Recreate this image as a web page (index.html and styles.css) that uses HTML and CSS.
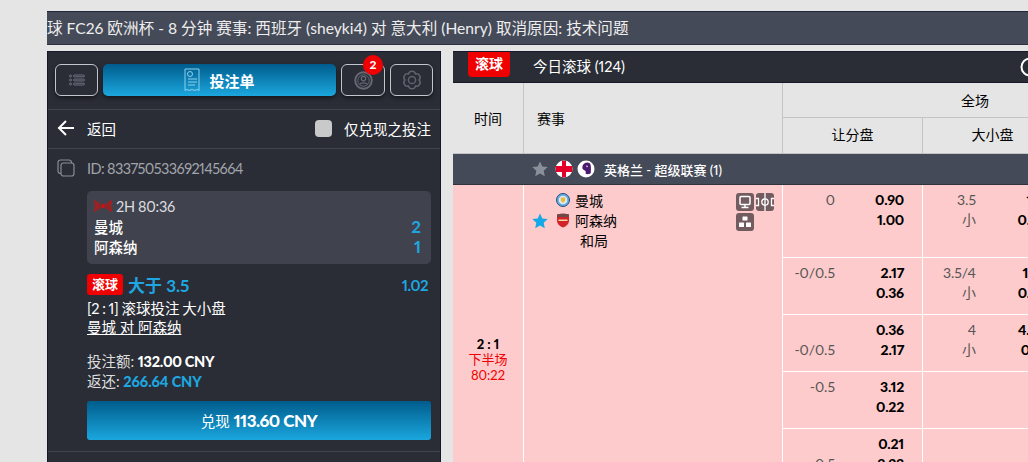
FILE: index.html
```html
<!DOCTYPE html>
<html lang="zh">
<head>
<meta charset="utf-8">
<title>投注单</title>
<link rel="stylesheet" href="styles.css">
</head>
<body>
<div class="marquee">球 FC26 欧洲杯 - 8 分钟 赛事: 西班牙 (sheyki4) 对 意大利 (Henry) 取消原因: 技术问题</div>
<div class="main">
  <aside class="side">
    <div class="toolbar">
      <button class="tool">
        <svg class="tool-ico" viewBox="0 0 16 12" width="16" height="12"><g fill="none" stroke="#6f7380" stroke-width="1"><circle cx="1.500" cy="2" r="1"/><circle cx="1.500" cy="6" r="1"/><circle cx="1.500" cy="10" r="1"/><rect x="4.500" y="1" width="11" height="1.800" rx=".7"/><rect x="4.500" y="5.100" width="11" height="1.800" rx=".7"/><rect x="4.500" y="9.200" width="11" height="1.800" rx=".7"/></g></svg>
      </button>
      <button class="slip-btn">
        <svg viewBox="0 0 16 24" width="16" height="24"><g fill="none" stroke="#8fd0ee" stroke-width="1"><path d="M1 1h14v21.500l-2-1-2 1-3-1-3 1-2-1-2 1z"/><circle cx="6" cy="6" r="2.500"/><path d="M4 11h9M4 14h9M4 17h7"/></g></svg>
        <span>投注单</span>
      </button>
      <button class="tool tool-wide">
        <svg viewBox="0 0 20 20" width="19" height="19"><g fill="none" stroke="#666a76"><circle cx="10" cy="10" r="8.700" stroke-width="2"/><circle cx="10" cy="10" r="6" stroke-width="1"/><circle cx="10" cy="8" r="2.300" stroke-width="1.300"/><path d="M5.800 14.200c1.400-2.400 7-2.400 8.400 0" stroke-width="1.300"/></g></svg>
        <span class="count">2</span>
      </button>
      <button class="tool">
        <svg viewBox="0 0 20 20" width="20" height="20"><g fill="none" stroke="#5f636f" stroke-width="1.500"><path d="M17 10A3.600 3.600 0 0 1 13.500 16.060 3.600 3.600 0 0 1 6.500 16.060 3.600 3.600 0 0 1 3 10 3.600 3.600 0 0 1 6.500 3.940 3.600 3.600 0 0 1 13.500 3.940 3.600 3.600 0 0 1 17 10z"/><circle cx="10" cy="10" r="3.600"/></g></svg>
      </button>
    </div>
    <div class="back-row">
      <svg class="arrow" viewBox="0 0 18 18" width="18" height="18"><path d="M9 2L2 9l7 7M2 9h15" fill="none" stroke="#fff" stroke-width="2"/></svg>
      <span class="back-label">返回</span>
      <span class="check"></span>
      <span class="check-label">仅兑现之投注</span>
    </div>
    <section class="bet">
      <div class="bet-id">
        <svg viewBox="0 0 18 18" width="18" height="18"><g fill="none" stroke="#8a8d96" stroke-width="1.200"><path d="M4 14.500H3.500A2.500 2.500 0 0 1 1 12V3.500A2.500 2.500 0 0 1 3.500 1H12a2.500 2.500 0 0 1 2.500 2.500V4"/><rect x="4" y="4" width="13" height="13" rx="2.500"/></g></svg>
        <span class="bet-id-text">ID: 833750533692145664</span>
      </div>
      <div class="bet-body">
        <div class="score-box">
          <div class="clock">
            <svg viewBox="0 0 18 12" width="18" height="12"><g fill="none" stroke="#c81212" stroke-width="1.400"><circle cx="9" cy="6" r="1.500" fill="#e01010"/><path d="M6 3q-1.500 3 0 6M12 3q1.500 3 0 6M3.800 1.500q-2.400 4.500 0 9M14.200 1.500q2.400 4.500 0 9M1.500.5q-3 5.500 0 11M16.500.5q3 5.500 0 11"/></g></svg>
            <span class="clock-text">2H 80:36</span>
          </div>
          <div class="team-score"><span>曼城</span><b>2</b></div>
          <div class="team-score"><span>阿森纳</span><b>1</b></div>
        </div>
        <div class="pick">
          <span class="live-tag">滚球</span>
          <span class="pick-name">大于 3.5</span>
          <span class="pick-odds">1.02</span>
        </div>
        <div class="bet-line bet-desc">[2 : 1] 滚球投注 大小盘</div>
        <div class="bet-line bet-match">曼城 对 阿森纳</div>
        <div class="stake">投注额: <b>132.00 CNY</b></div>
        <div class="stake">返还: <b class="blue">266.64 CNY</b></div>
        <button class="cashout">兑现 <b>113.60 CNY</b></button>
      </div>
    </section>
  </aside>

  <main class="board">
    <header class="board-head">
      <span class="board-tag">滚球</span>
      <span class="board-title">今日滚球 (124)</span>
      <svg class="board-ring" viewBox="0 0 20 20" width="20" height="20"><circle cx="10" cy="10" r="8.500" fill="none" stroke="#fff" stroke-width="2"/></svg>
    </header>
    <table class="odds">
      <colgroup><col class="c-time"><col class="c-event"><col class="c-mk"><col class="c-mk"><col class="c-x"></colgroup>
      <thead>
        <tr class="h1"><th rowspan="2" class="th-time">时间</th><th rowspan="2" class="th-event">赛事</th><th colspan="3" class="th-full">全场</th></tr>
        <tr class="h2"><th>让分盘</th><th>大小盘</th><th>独赢盘</th></tr>
      </thead>
      <tbody>
        <tr class="league"><td colspan="5">
          <div class="league-in">
            <svg viewBox="0 0 16 16" width="16" height="16"><path d="M8 .5l2.300 5 5.400.6-4 3.700 1.100 5.400L8 12.500l-4.800 2.700 1.100-5.400-4-3.700 5.400-.6z" fill="#8b8f9a"/></svg>
            <svg class="l-flag" viewBox="0 0 18 18" width="18" height="18"><circle cx="9" cy="9" r="8.500" fill="#fff"/><path d="M7 .7h4v5.300h6.300v6H11v5.300H7V12H.7V6H7z" fill="#e4002b"/></svg>
            <svg class="l-pl" viewBox="0 0 18 18" width="18" height="18"><circle cx="9" cy="9" r="8.500" fill="#fff"/><path d="M6 5c1-2.500 5-3.500 7-1.500 1.200 1.500 1 6 .8 9.500-1.500 1.500-4 1.500-5.300.5.700-1.500.2-3-1.200-3.300C5 9.500 5 7 6 5z" fill="#4b1a6e"/><path d="M9 5.500l2 .5-1 1.500z" fill="#fff"/></svg>
            <span>英格兰 - 超级联赛 (1)</span>
          </div>
        </td></tr>
        <tr class="r-first">
          <td rowspan="6" class="td-time"><b>2 : 1</b><span>下半场</span><span>80:22</span></td>
          <td rowspan="6" class="td-event">
            <div class="event-in">
              <div class="teams">
                <div class="team">
                  <svg viewBox="0 0 14 14" width="14" height="14"><circle cx="7" cy="7" r="6.500" fill="#6cabdd" stroke="#1c4f86"/><circle cx="7" cy="7" r="4.300" fill="#dcecf6"/><path d="M4.800 4.500h4.400v3.300L7 10 4.800 7.800z" fill="#e8bb3a"/></svg>
                  <span>曼城</span>
                </div>
                <div class="team">
                  <svg class="fav" viewBox="0 0 16 16" width="16" height="16"><path d="M8 .5l2.300 5 5.400.6-4 3.700 1.100 5.400L8 12.500l-4.800 2.700 1.100-5.400-4-3.700 5.400-.6z" fill="#15a9e8"/></svg>
                  <svg viewBox="0 0 14 15" width="14" height="15"><path d="M1 1.500C4 .5 10 .5 13 1.500v6C13 11 10 13.500 7 14.500 4 13.500 1 11 1 7.500z" fill="#d2232a"/><path d="M1 1.500C4 .5 10 .5 13 1.500V4H1z" fill="#6b4a48"/><path d="M2.500 6.500h9v1.500h-9z" fill="#f2d9a0"/></svg>
                  <span>阿森纳</span>
                </div>
                <div class="team team-draw"><span>和局</span></div>
              </div>
              <div class="tags">
                <span class="tag"><svg viewBox="0 0 18 18" width="18" height="18"><g fill="none" stroke="#fff" stroke-width="1.500"><rect x="4" y="3.500" width="10" height="8" rx="1"/><path d="M9 11.500v3M5.500 14.500h7"/></g></svg></span>
                <span class="tag"><svg viewBox="0 0 18 18" width="18" height="18"><g fill="none" stroke="#fff" stroke-width="1.300"><path d="M0 5.500h2.500v7H0M18 5.500h-2.500v7H18M9 0v18"/><circle cx="9" cy="9" r="3.200"/></g></svg></span>
                <span class="tag"><svg viewBox="0 0 18 18" width="18" height="18"><g fill="#fff"><rect x="6.500" y="3.500" width="5" height="4" rx=".6"/><rect x="3" y="9.500" width="5" height="4.500" rx=".6"/><rect x="10" y="9.500" width="5" height="4.500" rx=".6"/></g></svg></span>
              </div>
            </div>
          </td>
          <td class="mk-cell"><div class="mk"><span class="v">0</span><b>0.90</b><span></span><b>1.00</b></div></td>
          <td class="mk-cell"><div class="mk mk-ou"><span class="v">3.5</span><b>1.11</b><span class="v">小</span><b>0.88</b></div></td>
          <td class="mk-cell"></td>
        </tr>
        <tr class="r-std">
          <td class="mk-cell"><div class="mk"><span class="v">-0/0.5</span><b>2.17</b><span></span><b>0.36</b></div></td>
          <td class="mk-cell"><div class="mk mk-ou"><span class="v">3.5/4</span><b>1.76</b><span class="v">小</span><b>0.46</b></div></td>
          <td class="mk-cell"></td>
        </tr>
        <tr class="r-std">
          <td class="mk-cell"><div class="mk"><span></span><b>0.36</b><span class="v">-0/0.5</span><b>2.17</b></div></td>
          <td class="mk-cell"><div class="mk mk-ou"><span class="v">4</span><b>4.50</b><span class="v">小</span><b>0.18</b></div></td>
          <td class="mk-cell"></td>
        </tr>
        <tr class="r-std">
          <td class="mk-cell"><div class="mk"><span class="v">-0.5</span><b>3.12</b><span></span><b>0.22</b></div></td>
          <td class="mk-cell"></td>
          <td class="mk-cell"></td>
        </tr>
        <tr class="r-std">
          <td class="mk-cell"><div class="mk"><span></span><b>0.21</b><span class="v">0.5</span><b>3.23</b></div></td>
          <td class="mk-cell"></td>
          <td class="mk-cell"></td>
        </tr>
        <tr class="r-last"><td class="mk-cell"></td><td class="mk-cell"></td><td class="mk-cell"></td></tr>
      </tbody>
    </table>
  </main>
</div>
</body>
</html>
```
FILE: styles.css
```css
* { box-sizing: border-box; }
html, body { margin: 0; height: 462px; overflow: hidden; }
body {
  background: #e5e5e5;
  font-family: Lato, "Noto Sans CJK SC", sans-serif;
  font-variant-numeric: proportional-nums;
  font-size: 14.500px;
  color: #fff;
}
button { font: inherit; color: inherit; padding: 0; cursor: pointer; font-variant-numeric: proportional-nums; }

.marquee {
  margin: 11px 0 6px 47px;
  height: 34px;
  line-height: 33px;
  background: #454a58;
  border-top: 1px solid #22263a;
  border-bottom: 1px solid #2f3340;
  color: #eee;
  font-size: 15.600px;
  white-space: nowrap;
  overflow: hidden;
}

.main { display: flex; gap: 12px; margin-left: 47px; height: 411px; }

/* left column */
.side {
  flex: 0 0 394px;
  background: #2a2d36;
  border: 1px solid #15172a;
  border-bottom: 0;
}
.toolbar {
  display: flex;
  gap: 5px;
  padding: 12px 7px 13px;
  border-bottom: 1px solid #41444e;
}
.tool {
  position: relative;
  flex: 0 0 43px;
  height: 32px;
  display: flex;
  align-items: center;
  justify-content: center;
  background: #2a2d36;
  border: 1px solid #c2c5cd;
  border-radius: 6px;
  box-shadow: 0 2px 4px rgba(0, 0, 0, .5);
}
.tool-wide { flex-basis: 44px; }
.slip-btn {
  flex: 1;
  height: 32px;
  display: flex;
  align-items: center;
  justify-content: center;
  gap: 9px;
  border: 0;
  border-radius: 5px;
  background: linear-gradient(#005c8c, #1ba7de);
  font-size: 15px;
  font-weight: 700;
  box-shadow: 0 2px 4px rgba(0, 0, 0, .5);
}
.count {
  position: absolute;
  top: -10px;
  right: 1px;
  width: 20px;
  height: 20px;
  border-radius: 50%;
  background: #f00000;
  font-size: 12px;
  font-weight: 900;
  line-height: 20px;
  text-align: center;
}
.back-row {
  display: flex;
  align-items: center;
  height: 39px;
  padding: 0 9px 2px;
  border-bottom: 1px solid #41444e;
}
.back-label { margin-left: 12px; flex: 1; }
.check {
  width: 17px;
  height: 17px;
  border-radius: 4px;
  background: #c9c9c9;
  margin-right: 12px;
}
.bet { padding: 10px 9px 11px; border-bottom: 1px solid #41444e; }
.bet-id { display: flex; align-items: center; gap: 12px; height: 18px; color: #a2a4ab; }
.bet-id-text { letter-spacing: -.6px; }
.bet-body { margin: 14px 0 0 30px; }
.score-box {
  height: 73px;
  padding: 5px 10px 7px 7px;
  border-radius: 5px;
  background: #40434d;
}
.clock { display: flex; align-items: center; gap: 4px; height: 20px; color: #dcdde0; }
.clock-text { letter-spacing: -.3px; }
.team-score { display: flex; justify-content: space-between; align-items: center; height: 20px; font-weight: 500; }
.team-score b { color: #1ea6e0; font-size: 17px; font-weight: 700; }
.pick { display: flex; align-items: center; height: 21px; margin-top: 10px; }
.live-tag {
  flex: 0 0 36px;
  height: 21px;
  line-height: 21px;
  border-radius: 3px;
  background: #f00000;
  font-size: 13px;
  font-weight: 700;
  text-align: center;
}
.pick-name { margin-left: 5px; flex: 1; color: #1ea6e0; font-size: 17px; font-weight: 700; }
.pick-odds { margin-right: 3px; color: #1ea6e0; font-size: 15px; font-weight: 700; letter-spacing: -.5px; }
.bet-line { line-height: 19px; }
.bet-desc { margin-top: 4px; word-spacing: -1px; }
.bet-match { text-decoration: underline; }
.stake { height: 20px; line-height: 20px; color: #ddd; }
.bet-match + .stake { margin-top: 15px; }
.stake b { color: #fff; font-size: 14.500px; font-weight: 900; letter-spacing: -.3px; }
.stake b.blue { color: #1ea6e0; letter-spacing: -.1px; }
.cashout {
  display: block;
  width: 100%;
  height: 39px;
  margin-top: 9px;
  border: 0;
  border-radius: 3px;
  background: linear-gradient(#005c8c, #1ba7de);
}
.cashout b { font-size: 17px; font-weight: 900; letter-spacing: -.5px; }

/* right column */
.board { flex: 1; min-width: 0; overflow: hidden; color: #000; }
.board-head {
  display: flex;
  align-items: flex-start;
  height: 32px;
  padding-left: 15px;
  background: #2a2d36;
  border-top: 1px solid #15172a;
  border-bottom: 1px solid #15172a;
  color: #fff;
}
.board-tag {
  flex: 0 0 42px;
  height: 25px;
  line-height: 23px;
  border-radius: 0 0 4px 4px;
  background: #f00000;
  font-size: 14px;
  font-weight: 700;
  text-align: center;
}
.board-title { margin-left: 23px; flex: 1; line-height: 29px; }
.board-ring { flex: none; margin: 5px -12px 0 0; }

.odds { width: 715px; table-layout: fixed; border-collapse: separate; border-spacing: 0; font-size: 14px; }
.c-time { width: 71px; }
.c-event { width: 259px; }
.c-mk { width: 140px; }
.c-x { width: 105px; }
.odds th { padding: 0; font-weight: 400; font-size: 14px; border-right: 1px solid #c4c4c4; border-bottom: 1px solid #c4c4c4; }
.h1 { height: 35px; }
.h2 { height: 36px; }
.h2 th { padding-bottom: 3px; }
.odds .th-event { text-align: left; padding-left: 13px; }

.league td { height: 31px; padding: 0; background: #454a58; border-bottom: 1px solid #2f3340; }
.league-in { display: flex; align-items: center; height: 30px; padding-left: 79px; color: #fff; font-weight: 500; font-size: 13px; }
.l-flag { margin-left: 7px; }
.l-pl { margin-left: 4px; }
.league-in span { margin-left: 9px; }

.odds tbody tr:not(.league) td { background: #fdcbcb; border-right: 1px solid #fff; border-bottom: 1px solid #fff; vertical-align: top; padding: 0; }
.r-first { height: 73px; }
.r-std { height: 57px; }
.r-last { height: 50px; }
.odds tbody tr .td-time.td-time { vertical-align: middle; text-align: center; color: #f00000; }
.td-time b, .td-time span { display: block; line-height: 15.500px; }
.td-time b { color: #000; font-weight: 900; font-size: 13px; }
.td-time span { font-size: 13px; }

.event-in { display: flex; padding: 5px 6px 0 8px; }
.teams { flex: 1; }
.team { display: flex; align-items: center; height: 20px; padding-left: 24px; position: relative; gap: 5px; font-size: 14px; }
.fav { position: absolute; left: 0; top: 3px; }
.team-draw { padding-left: 48px; }
.tags { flex: 0 0 40px; display: flex; flex-wrap: wrap; gap: 2px; align-content: flex-start; margin-top: 3px; }
.tag { width: 18px; height: 18px; border-radius: 3px; background: #725c60; display: block; }
.tag svg { display: block; }

.mk { display: grid; grid-template-columns: 52px 69px; grid-auto-rows: 19.500px; padding-top: 5px; text-align: right; align-items: center; }
.mk-ou { grid-template-columns: 53px 70px; }
.mk .v { color: #555; font-weight: 400; font-size: 14px; }
.mk b { font-size: 14px; font-weight: 900; letter-spacing: -.2px; }
```
